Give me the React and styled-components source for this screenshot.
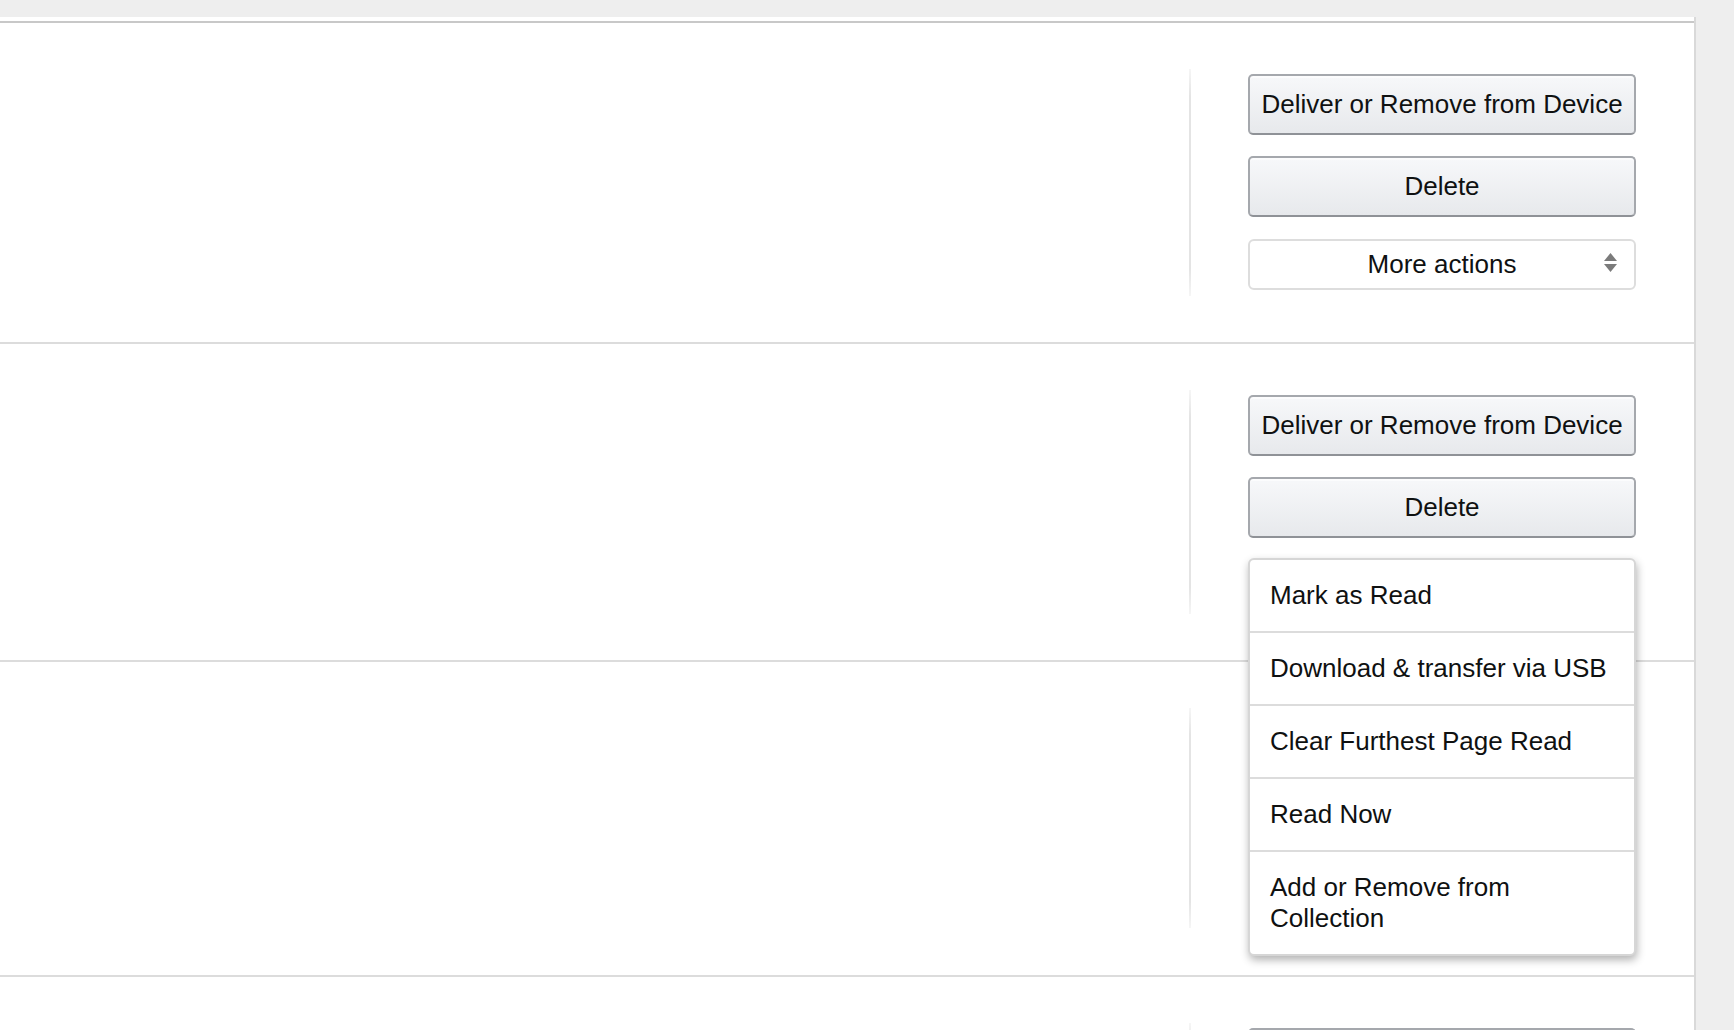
import React from 'react';
import styled, { createGlobalStyle } from 'styled-components';

const GlobalStyle = createGlobalStyle`
  body {
    margin: 0;
    background: #eeeeee;
    font-family: 'Liberation Sans', Arial, sans-serif;
    color: #0f1111;
  }
`;

const rows = [
  { id: 1, height: 227 },
  { id: 2, height: 224, open: true },
  { id: 3, height: 220 },
  { id: 4, height: 220 },
];

const menuItems = [
  'Mark as Read',
  'Download & transfer via USB',
  'Clear Furthest Page Read',
  'Read Now',
  'Add or Remove from Collection',
];

// up/down caret pair on the select box
const SortArrows = () => (
  <svg width="13" height="19" viewBox="0 0 13 19">
    <path d="M6.5 0 L13 8 H0 Z" fill="#7b7b7b" />
    <path d="M6.5 19 L13 11 H0 Z" fill="#7b7b7b" />
  </svg>
);

const App = () => (
  <>
    <GlobalStyle />
    <Page>
      <Panel>
        <List>
          {rows.map(row => (
            <Row key={row.id}>
              <Divider style={{ height: row.height }} />
              <Actions>
                <Button>Deliver or Remove from Device</Button>
                <Button>Delete</Button>
                <SelectWrap>
                  <Select>
                    More actions
                    <Arrows>
                      <SortArrows />
                    </Arrows>
                  </Select>
                  {row.open && (
                    <Menu>
                      {menuItems.map(item => (
                        <MenuItem key={item}>{item}</MenuItem>
                      ))}
                    </Menu>
                  )}
                </SelectWrap>
              </Actions>
            </Row>
          ))}
        </List>
      </Panel>
    </Page>
  </>
);

const Page = styled.div`
  height: 1030px;
  overflow: hidden;
  padding-top: 17px;
  box-sizing: border-box;
`;

const Panel = styled.div`
  width: 1696px;
  min-height: 1013px;
  box-sizing: border-box;
  background: #fff;
  border-right: 2px solid #d9d9d9;
  padding-top: 4px;
`;

const List = styled.div`
  border-top: 2px solid #c8c8c8;
`;

const Row = styled.div`
  display: flex;
  justify-content: flex-end;
  align-items: flex-start;
  gap: 57px;
  padding: 46px 58px 46px 0;
  border-bottom: 2px solid #dcdcdc;
`;

const Divider = styled.div`
  width: 2px;
  background: linear-gradient(
    to bottom,
    #f6f6f6,
    #e4e4e4 12%,
    #e4e4e4 88%,
    #f6f6f6
  );
`;

const Actions = styled.div`
  width: 388px;
  padding-top: 5px;
  display: flex;
  flex-direction: column;
  gap: 21px;
`;

const Button = styled.button`
  height: 61px;
  width: 100%;
  box-sizing: border-box;
  border: 2px solid #a5a8ad;
  border-bottom-color: #8f9297;
  border-radius: 5px;
  background: linear-gradient(to bottom, #f7f8fa, #e7e9ec);
  box-shadow: inset 0 2px 0 rgba(255, 255, 255, 0.6);
  font-family: inherit;
  font-size: 26px;
  color: #0f1111;
  padding: 0;
  cursor: pointer;
`;

const SelectWrap = styled.div`
  position: relative;
  margin-top: 1px;
`;

const Select = styled.div`
  position: relative;
  height: 51px;
  box-sizing: border-box;
  border: 2px solid #dddddd;
  border-radius: 6px;
  background: #fff;
  display: flex;
  align-items: center;
  justify-content: center;
  font-size: 26px;
`;

const Arrows = styled.span`
  position: absolute;
  right: 17px;
  top: 12px;
  display: flex;
`;

const Menu = styled.div`
  position: absolute;
  top: -2px;
  left: 0;
  right: 0;
  z-index: 5;
  background: #fff;
  border: 2px solid #d6d6d6;
  border-radius: 6px;
  box-shadow: 1px 4px 8px rgba(0, 0, 0, 0.3);
`;

const MenuItem = styled.div`
  padding: 20px 20px;
  font-size: 26px;
  line-height: 31px;
  border-bottom: 2px solid #dcdcdc;
  cursor: pointer;

  &:last-child {
    border-bottom: none;
    padding-bottom: 20px;
    padding-right: 90px;
  }
`;

export default App;
